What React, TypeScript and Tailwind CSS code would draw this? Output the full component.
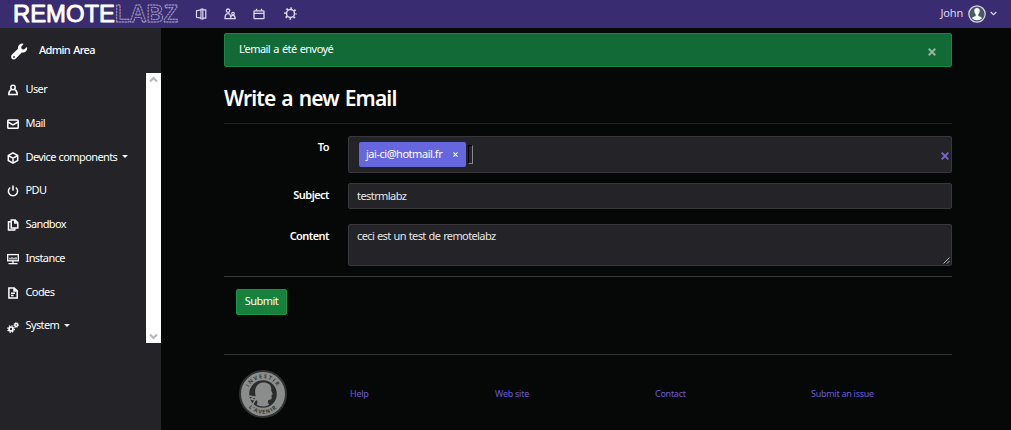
import type { ReactNode } from "react";

function Icon({ children, size = 12, className = "" }: { children: ReactNode; size?: number; className?: string }) {
  return (
    <svg viewBox="0 0 12 12" width={size} height={size} fill="none" stroke="currentColor" strokeWidth="1.5" className={`shrink-0 ${className}`}>
      {children}
    </svg>
  );
}

function Logo() {
  return (
    <svg width="166" height="28" viewBox="0 0 166 28" className="shrink-0 overflow-visible">
      <g fontFamily="Liberation Sans, sans-serif" fontSize="24" strokeLinejoin="round">
        <text x="0" y="21.700" textLength="102" lengthAdjust="spacingAndGlyphs" fill="#fff" stroke="#fff" strokeWidth="0.900">REMOTE</text>
        <text x="102" y="21.700" textLength="63" lengthAdjust="spacingAndGlyphs" fill="none" stroke="#b0a8d2" strokeWidth="0.900" strokeDasharray="2.400 0.600" fontWeight="700">LABZ</text>
      </g>
    </svg>
  );
}

const icons = {
  user: <><circle cx="6" cy="3.5" r="2.2" /><path d="M4.2 5.8C2.400 6.600 1.800 8 1.800 10.600h8.400c0-2.600-.6-4-2.400-4.800" /></>,
  mail: <><rect x="0.800" y="1.900" width="10.400" height="8.400" rx="0.800" /><path d="M1 4l5 3 5-3" /></>,
  cube: <path d="M6 .9l4.700 2.600v5L6 11.100 1.300 8.500v-5zM1.300 3.700L6 6.200l4.700-2.500M6 6.200v5" />,
  power: <path d="M3.200 2.500a4.600 4.600 0 1 0 5.600 0M6 .5v5.300" />,
  copy: <><path d="M4.200 1h3.900l2.700 2.600v5.500H4.200zM7.700 1v3.100h3" /><path d="M4 2.700H1.500v8.400h6.200V9.300" /></>,
  monitor: <><rect x="0.700" y="1.600" width="10.600" height="6.200" strokeWidth="1.300" /><path d="M3 6.400V4.800M5 6.400V4.200M7 6.400V4.800M9 6.400V4.200M6 7.800v2.800M1.500 10.600h9" strokeWidth="1.300" /></>,
  code: <path d="M1.900.900h5.300l3 3v7.200H1.900zM7 1v3h3M4 6.300h4M4 8.600h2.500" />,
};

function Gears() {
  return (
    <Icon className="mt-[2px]">
      <circle cx="4" cy="8" r="2" strokeWidth="1.700" />
      <circle cx="4" cy="8" r="3.300" strokeWidth="1.200" strokeDasharray="1.300 1.300" />
      <circle cx="9.200" cy="4" r="1.400" strokeWidth="1.500" />
      <circle cx="9.200" cy="4" r="2.400" strokeWidth="0.900" strokeDasharray="0.940 0.940" />
    </Icon>
  );
}

function Item({ icon, label, caret }: { icon: ReactNode; label: string; caret?: boolean }) {
  return (
    <a className="flex h-[33.75px] items-center pl-[7px]">
      <span className="mt-[1.500px] flex">{icon}</span>
      <span className="ml-[6.5px] text-[11px] tracking-[-0.600px] [word-spacing:0.5px]">{label}</span>
      {caret && <span className="ml-[5px] border-x-[3px] border-t-[3px] border-x-transparent border-t-white" />}
    </a>
  );
}

function Chevron({ up }: { up?: boolean }) {
  return (
    <svg width="9" height="7" viewBox="0 0 9 7" fill="none" stroke="#b9b9b9" strokeWidth="2.200">
      <path d={up ? "M1 5.5L4.5 2 8 5.5" : "M1 1.5L4.5 5 8 1.5"} />
    </svg>
  );
}

function Sidebar() {
  return (
    <aside className="w-[161px] shrink-0 bg-[#242328]">
      <div className="flex h-[45px] items-center pl-[11px]">
        <svg width="17" height="17" viewBox="0 0 17 17" fill="none" className="mt-px">
          <path fillRule="evenodd" fill="#fff" d="M11.800.400C8.500.500 6.400 2.800 7 5.700L1 11.600c-1.200 1.300-1.200 3.100-.2 4.100s2.800 1.100 4.100-.2l5.900-6.100c3.100.6 5.500-1.400 5.400-4.700l-.3-.7-2.900 2.600-2.200-.4-.7-2.200 2.500-2.900zM3 13a.9.900 0 1 1 0 1.800.9.900 0 0 1 0-1.800z" />
        </svg>
        <span className="ml-[11px] text-[11px] font-medium tracking-[-0.650px] [word-spacing:1px]">Admin Area</span>
      </div>
      <div className="flex h-[270px] justify-between">
        <nav className="-mt-[0.4px]">
          <Item icon={<Icon>{icons.user}</Icon>} label="User" />
          <Item icon={<Icon>{icons.mail}</Icon>} label="Mail" />
          <Item icon={<Icon>{icons.cube}</Icon>} label="Device components" caret />
          <Item icon={<Icon>{icons.power}</Icon>} label="PDU" />
          <Item icon={<Icon>{icons.copy}</Icon>} label="Sandbox" />
          <Item icon={<Icon>{icons.monitor}</Icon>} label="Instance" />
          <Item icon={<Icon>{icons.code}</Icon>} label="Codes" />
          <Item icon={<Gears />} label="System" caret />
        </nav>
        <div className="flex w-[15px] flex-col items-center justify-between bg-white py-[3px]">
          <Chevron up />
          <Chevron />
        </div>
      </div>
    </aside>
  );
}

function Header() {
  return (
    <header className="flex h-7 shrink-0 items-center bg-[#392c70] pr-[14px] pl-[13px] text-[#dcd8f2]">
      <Logo />
      <div className="ml-4 flex items-center gap-[17px] pb-px">
        <Icon><path d="M6 1.200v9.600l1.800.300V.9L6 1.200zM7.800 1.900h3v8.200h-3M6 1.900L1.500 2.700v6.600l4.500.8" strokeWidth="1.200" /></Icon>
        <Icon>
          <circle cx="4" cy="2.700" r="1.700" strokeWidth="1.300" />
          <path d="M1 10.700c0-3.400.8-5 3-5s2.800 1.600 2.800 5zM6.800 10.700h4.400c0-2.300-.8-3.300-2.200-3.300s-2 .8-2.300 1.600" strokeWidth="1.300" />
          <circle cx="9" cy="5.600" r="1.300" strokeWidth="1.200" />
        </Icon>
        <Icon><rect x="1" y="2.900" width="10" height="7.800" rx="0.600" strokeWidth="1.300" /><path d="M1 5.300h10M3.500.7v2.200M8.500.7v2.200" strokeWidth="1.300" /></Icon>
        <Icon size={13} className="ml-[2px]">
          <circle cx="6" cy="6" r="3.700" strokeWidth="1.400" />
          <circle cx="6" cy="6" r="5" strokeWidth="1.700" strokeDasharray="1.600 2.327" strokeDashoffset="0.800" />
        </Icon>
      </div>
      <span className="ml-auto pb-[2px] text-[11px] tracking-[-0.200px]">John</span>
      <svg width="18" height="18" viewBox="0 0 18 18" className="-mt-px ml-[5px]">
        <circle cx="9" cy="9" r="8.200" fill="#4b5a66" stroke="#d8d5ea" strokeWidth="1.200" />
        <path d="M9 3c-2 0-2.900 1.400-2.700 3.300.2 1.600.8 2.500 1.400 3.100v1.500c-2 .6-3.200 1-3.700 2.300a7 7 0 0 0 10 0c-.5-1.300-1.700-1.700-3.700-2.300V9.400c.6-.6 1.200-1.500 1.400-3.100C11.900 4.400 11 3 9 3z" fill="#fff" />
      </svg>
      <svg width="7" height="5" viewBox="0 0 7 5" fill="none" stroke="currentColor" strokeWidth="1.200" className="-mt-px ml-[4px]"><path d="M.7 1l2.800 2.700L6.300 1" /></svg>
    </header>
  );
}

function Cross({ color, size, width }: { color: string; size: number; width: number }) {
  return (
    <svg width={size} height={size} viewBox="0 0 8 8" stroke={color} strokeWidth={width} className="shrink-0">
      <path d="M.7.700l6.600 6.600M7.300.700L.7 7.300" />
    </svg>
  );
}

function Seal() {
  return (
    <svg width="48" height="48" viewBox="0 0 48 48" className="shrink-0">
      <defs>
        <path id="arc-top" d="M8.200 24a15.800 15.800 0 0 1 31.600 0" />
        <path id="arc-bottom" d="M4.300 24a19.700 19.700 0 0 0 39.400 0" />
      </defs>
      <circle cx="24" cy="24" r="23" fill="#8b8d8c" stroke="#303332" strokeWidth="2" />
      <circle cx="24" cy="24" r="13.800" fill="#292c2b" />
      <path d="M23 12.600c4-.7 8.200 1 9 4.300.6 2-.1 3 .6 4.700l1.200 2.700-1.300.8.200 3.200c-.2 1.500-1.300 1.500-3.300 1.600-.8 1.200-.6 3 .7 4.800-3.600 2.400-8.500 2.400-12.500.1 1.200-2 1-3.500.3-4.500l-2.300 1 .6-3-2.100-.4 2.600-2.200c-1.800-5.500.4-11.800 6.300-13.100z" fill="#8b8d8c" />
      <path d="M10 26l5 1-3 2 4 1-2 4" fill="none" stroke="#8b8d8c" strokeWidth="1.500" />
      <g fontFamily="Open Sans, sans-serif" fontSize="5.400" fontWeight="700" fill="#303332" textAnchor="middle">
        <text letterSpacing="1.400"><textPath href="#arc-top" startOffset="50%">INVESTIR</textPath></text>
        <text letterSpacing="1"><textPath href="#arc-bottom" startOffset="50%">L’AVENIR</textPath></text>
      </g>
    </svg>
  );
}

function Row({ label, className, labelClass = "pt-[3px]", children }: { label: string; className: string; labelClass?: string; children: ReactNode }) {
  return (
    <div className={`flex ${className}`}>
      <label className={`w-[105px] shrink-0 text-right text-[11px] leading-4 font-semibold tracking-[-0.550px] ${labelClass}`}>{label}</label>
      <div className="ml-[19px] flex-1">{children}</div>
    </div>
  );
}

export default function App() {
  return (
    <div className="flex h-[430px] w-[1011px] flex-col overflow-hidden bg-[#060807] font-['Noto_Sans','Open_Sans',sans-serif] text-white">
      <Header />
      <div className="flex min-h-0 flex-1">
        <Sidebar />
        <main className="ml-[63px] w-[728px] pt-[5px]">
          <div className="flex h-[34px] items-center justify-between rounded-[2px] border border-[#16883f] bg-[#126a36] pr-[15px] pl-[14px]">
            <span className="pb-px text-[11px] tracking-[-0.560px] [word-spacing:0.8px]">L'email a été envoyé</span>
            <span className="mt-[3px]"><Cross color="#8fb89d" size={8} width={2} /></span>
          </div>
          <h1 className="mt-[17px] h-[39px] text-[21px] leading-[29px] font-semibold tracking-[-0.850px] [word-spacing:1.300px]">Write a new Email</h1>
          <hr className="border-[#222424]" />
          <form>
            <Row label="To" className="mt-3">
              <div className="flex h-[37px] items-center rounded-[2px] border border-[#38373c] bg-[#242328] pr-[2px] pl-[10px]">
                <span className="flex h-[25px] w-[107px] items-center justify-between rounded-[2px] bg-[#6667df] pr-[8px] pl-[7px] text-[11px] tracking-[-0.470px]">
                  <span className="pb-px">jai-ci@hotmail.fr</span>
                  <Cross color="#fff" size={5} width={1.700} />
                </span>
                <span className="ml-[2px] h-[19px] w-[5px] border border-t-black border-r-[#88878c] border-b-[#88878c] border-l-black" />
                <span className="mt-[3px] ml-auto"><Cross color="#7b66d9" size={8} width={1.900} /></span>
              </div>
            </Row>
            <Row label="Subject" className="mt-[10px]" labelClass="pt-[3.500px]">
              <div className="flex h-[26px] items-center rounded-[2px] border border-[#38373c] bg-[#242328] pl-[8px] text-[11px] tracking-[-0.570px] text-[#e6e6e6]">testrmlabz</div>
            </Row>
            <Row label="Content" className="mt-[15px]" labelClass="pt-[4px]">
              <div className="relative h-[42px] rounded-[2px] border border-[#38373c] bg-[#242328] pt-[3px] pl-[8px] text-[11px] leading-4 tracking-[-0.610px] text-[#e6e6e6] [word-spacing:0.6px]">
                ceci est un test de remotelabz
                <svg width="7" height="7" viewBox="0 0 7 7" stroke="#c9c9c9" strokeWidth="0.900" className="absolute right-px bottom-px"><path d="M.5 6.500l6-6M4 6.500L6.500 4" /></svg>
              </div>
            </Row>
            <hr className="mt-[10px] border-[#383a39]" />
            <button type="button" className="mt-3 ml-3 flex h-[26px] w-[51px] items-center justify-center rounded-[2px] border border-[#199447] bg-[#17803d] pb-[2px] text-[11px] tracking-[-0.500px]">Submit</button>
          </form>
          <footer className="mt-[39px] flex h-[78px] items-center border-t border-[#303332] pl-[15px] text-[9px] tracking-[-0.270px] text-[#6b5bd0]">
            <Seal />
            <a className="ml-[63px] w-[145px]">Help</a>
            <a className="w-[160px]">Web site</a>
            <a className="w-[156px]">Contact</a>
            <a className="whitespace-nowrap">Submit an issue</a>
          </footer>
        </main>
      </div>
    </div>
  );
}
